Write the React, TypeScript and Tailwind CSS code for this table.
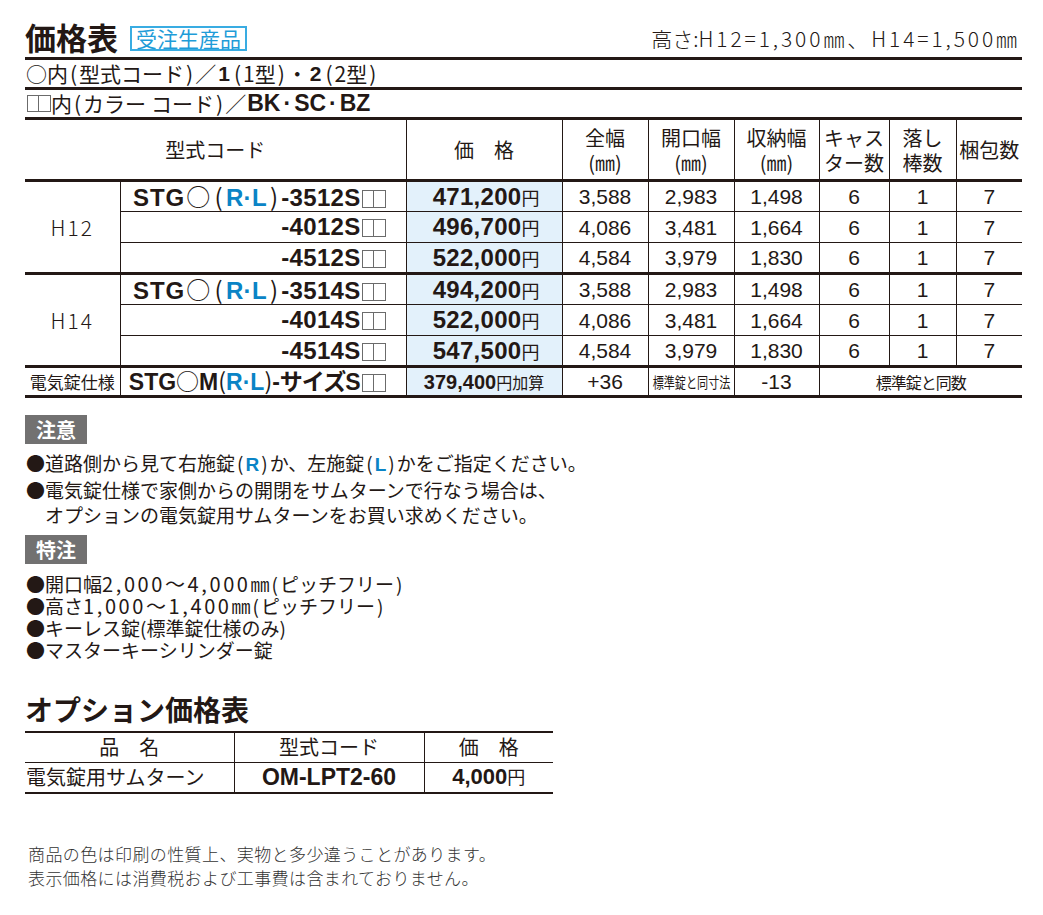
import React from "react";

const ink = "text-[#231815]";
const jp = "font-['Noto_Sans_CJK_JP',sans-serif]";
const latin = "font-['Liberation_Sans','Noto_Sans_CJK_JP',sans-serif]";
const blue = "text-[#0a84c6]";

// 色コードの□□
const Boxes: React.FC<{ h?: string }> = ({ h = "h-[18px]" }) => (
  <span className="inline-flex align-[-2px] ml-[1px]">
    <span className={`w-[12px] ${h} border border-[#6b6b6b]`} />
    <span className={`w-[12px] ${h} border border-l-0 border-[#6b6b6b]`} />
  </span>
);

// 細めの括弧
const P: React.FC<{ c: string; m?: string }> = ({ c, m = "mx-[2px]" }) => (
  <span className={`${jp} font-normal ${m}`}>{c}</span>
);

const Circle: React.FC<{ m?: string }> = ({ m = "" }) => (
  <span className={`${jp} font-normal ${m}`}>○</span>
);

// 数字は少し広め
const N: React.FC<{ children: React.ReactNode }> = ({ children }) => (
  <span className="text-[20px] tracking-[2.6px]">{children}</span>
);

interface Row {
  code: React.ReactNode;
  price: string;
  w: string;
  open: string;
  store: string;
}

const first = (size: string) => (
  <>
    <span className="tracking-[1px]">STG</span>
    <Circle m="mx-[1px]" />
    <P c="(" m="mx-[3px]" />
    <span className={blue}>R·L</span>
    <P c=")" m="mx-[3px]" />
    {size}
  </>
);

const h12: Row[] = [
  { code: first("-3512S"), price: "471,200", w: "3,588", open: "2,983", store: "1,498" },
  { code: "-4012S", price: "496,700", w: "4,086", open: "3,481", store: "1,664" },
  { code: "-4512S", price: "522,000", w: "4,584", open: "3,979", store: "1,830" },
];

const h14: Row[] = [
  { code: first("-3514S"), price: "494,200", w: "3,588", open: "2,983", store: "1,498" },
  { code: "-4014S", price: "522,000", w: "4,086", open: "3,481", store: "1,664" },
  { code: "-4514S", price: "547,500", w: "4,584", open: "3,979", store: "1,830" },
];

const cell = "border-l border-[#231815] text-center p-0";
const num = `${cell} ${latin} text-[21px] leading-none`;
const codeCell = `${cell} ${latin} text-right pr-[20px] text-[24px] font-bold leading-none whitespace-nowrap tracking-[0.3px]`;

const Group: React.FC<{ label: string; rows: Row[] }> = ({ label, rows }) => (
  <>
    {rows.map((r, i) => (
      <tr
        key={i}
        className={`h-[31px] ${i === 0 ? "border-t-[3px]" : "border-t"} border-[#231815]`}
      >
        {i === 0 && (
          <td
            rowSpan={3}
            className="p-0 text-center text-[21px] leading-none font-light tracking-[2px]"
          >
            {label}
          </td>
        )}
        <td className={codeCell}>
          {r.code}
          <Boxes />
        </td>
        <td
          className={`${cell} bg-[#e3f1fb] text-right pr-[22px] ${latin} font-bold text-[24px] leading-none tracking-[0.3px] whitespace-nowrap`}
        >
          {r.price}
          <span className={`${jp} font-normal text-[18px] tracking-normal`}>円</span>
        </td>
        <td className={num}>{r.w}</td>
        <td className={num}>{r.open}</td>
        <td className={num}>{r.store}</td>
        <td className={num}>6</td>
        <td className={num}>1</td>
        <td className={num}>7</td>
      </tr>
    ))}
  </>
);

const Bullet: React.FC<{ children: React.ReactNode }> = ({ children }) => (
  <div className="whitespace-nowrap">●{children}</div>
);

export default function App() {
  return (
    <div className={`w-[1043px] min-h-[915px] bg-white ${ink} ${jp}`}>
      <div className="w-[997px] ml-[25px]">
        {/* 見出し */}
        <div className="flex items-end justify-between h-[57px] pb-[5px]">
          <div className="flex items-end">
            <h1 className="text-[31px] font-bold leading-none">価格表</h1>
            <span className="ml-[12px] mb-[1px] border-2 border-[#39ace2] text-[#1f9cd8] text-[21px] leading-[20px] px-[4px] pb-[1px]">
              受注生産品
            </span>
          </div>
          <div className="text-[21px] font-light leading-none pr-[2px] mb-[3px] whitespace-nowrap">
            高さ:<span className="tracking-[2.9px]">H12=1,300㎜、H14=1,500㎜</span>
          </div>
        </div>

        <div className="border-t-[3px] border-[#231815] h-[30px] flex items-center text-[21px] pl-[1px] whitespace-nowrap">
          ○内<P c="(" />型式コード<P c=")" />／<b className={`${latin} mx-[2px]`}>1</b>
          <P c="(" />1型<P c=")" />・<b className={`${latin} mx-[2px]`}>2</b>
          <P c="(" />2型<P c=")" />
        </div>
        <div className="border-t-[3px] border-[#231815] h-[30px] flex items-center text-[21px] pl-[1px] whitespace-nowrap">
          <Boxes h="h-[17px]" />
          内<P c="(" />カラー<span className="inline-block w-[5px]" />コード<P c=")" />／
          <b className={`${latin} text-[23px] ml-[1px]`}>
            BK<span className="mx-[3px]">·</span>SC<span className="mx-[3px]">·</span>BZ
          </b>
        </div>

        {/* 価格表 */}
        <table className="w-[997px] table-fixed border-collapse">
          <colgroup>
            <col className="w-[95px]" />
            <col className="w-[286px]" />
            <col className="w-[156px]" />
            <col className="w-[86px]" />
            <col className="w-[86px]" />
            <col className="w-[85px]" />
            <col className="w-[70px]" />
            <col className="w-[67px]" />
            <col className="w-[66px]" />
          </colgroup>
          <thead>
            <tr className="h-[62px] border-t-[3px] border-[#231815] text-[20px] leading-[25px]">
              <th colSpan={2} className="p-0 font-normal text-center">
                型式コード
              </th>
              <th className={`${cell} font-normal`}>価　格</th>
              <th className={`${cell} font-normal`}>
                全幅
                <br />
                (㎜)
              </th>
              <th className={`${cell} font-normal`}>
                開口幅
                <br />
                (㎜)
              </th>
              <th className={`${cell} font-normal`}>
                収納幅
                <br />
                (㎜)
              </th>
              <th className={`${cell} font-normal`}>
                キャス
                <br />
                ター数
              </th>
              <th className={`${cell} font-normal`}>
                落し
                <br />
                棒数
              </th>
              <th className={`${cell} font-normal`}>梱包数</th>
            </tr>
          </thead>
          <tbody>
            <Group label="H12" rows={h12} />
            <Group label="H14" rows={h14} />
            <tr className="h-[30px] border-t-[3px] border-b-[3px] border-[#231815]">
              <td className="p-0 text-center text-[17px] leading-none whitespace-nowrap">
                電気錠仕様
              </td>
              <td
                className={`${cell} ${latin} text-right pr-[20px] text-[23px] font-bold leading-none whitespace-nowrap`}
              >
                STG<Circle />M<P c="(" m="mx-0" />
                <span className={blue}>R·L</span>
                <P c=")" m="mx-0" />-<span className={`${jp} tracking-[-1px]`}>サイズ</span>S
                <Boxes />
              </td>
              <td
                className={`${cell} bg-[#e3f1fb] ${latin} font-bold text-[20px] leading-none whitespace-nowrap`}
              >
                379,400
                <span className={`${jp} font-normal text-[16px]`}>円加算</span>
              </td>
              <td className={num}>+36</td>
              <td className={cell}>
                <div className="flex justify-center">
                  <span className="shrink-0 inline-block text-[15px] leading-none scale-x-[0.74] whitespace-nowrap">
                    標準錠と同寸法
                  </span>
                </div>
              </td>
              <td className={num}>-13</td>
              <td colSpan={3} className={`${cell} text-[16px] leading-none tracking-[-1px]`}>
                標準錠と同数
              </td>
            </tr>
          </tbody>
        </table>

        {/* 注意 */}
        <div className="mt-[17px] w-[62px] h-[29px] bg-[#727171] text-white text-[20px] font-bold flex items-center justify-center">
          注意
        </div>
        <div className="mt-[6px] text-[19px] leading-[25px] pl-[1px]">
          <Bullet>
            道路側から見て右施錠<P c="(" />
            <b className={`${latin} ${blue}`}>R</b>
            <P c=")" />か、左施錠<P c="(" />
            <b className={`${latin} ${blue}`}>L</b>
            <P c=")" />かをご指定ください。
          </Bullet>
          <Bullet>電気錠仕様で家側からの開閉をサムターンで行なう場合は、</Bullet>
          <div className="pl-[19px]">オプションの電気錠用サムターンをお買い求めください。</div>
        </div>

        {/* 特注 */}
        <div className="mt-[8px] w-[62px] h-[29px] bg-[#727171] text-white text-[20px] font-bold flex items-center justify-center">
          特注
        </div>
        <div className="mt-[9px] text-[19px] leading-[22px] pl-[1px]">
          <Bullet>
            開口幅<N>2,000～4,000</N>㎜<P c="(" />ピッチフリー<P c=")" />
          </Bullet>
          <Bullet>
            高さ<N>1,000～1,400</N>㎜<P c="(" />ピッチフリー<P c=")" />
          </Bullet>
          <Bullet>キーレス錠(標準錠仕様のみ)</Bullet>
          <Bullet>マスターキーシリンダー錠</Bullet>
        </div>

        {/* オプション価格表 */}
        <h2 className="mt-[34px] text-[28px] font-bold leading-none">オプション価格表</h2>
        <table className="mt-[8px] w-[528px] table-fixed border-collapse">
          <colgroup>
            <col className="w-[209px]" />
            <col className="w-[190px]" />
            <col className="w-[129px]" />
          </colgroup>
          <thead>
            <tr className="h-[30px] border-t-2 border-[#231815] text-[20px] leading-none">
              <th className="p-0 font-normal text-center">品　名</th>
              <th className={`${cell} font-normal`}>型式コード</th>
              <th className={`${cell} font-normal`}>価　格</th>
            </tr>
          </thead>
          <tbody>
            <tr className="h-[31px] border-t border-b-2 border-[#231815]">
              <td className="p-0 text-[20px] leading-none pl-[1px] whitespace-nowrap">
                電気錠用サムターン
              </td>
              <td className={`${cell} ${latin} font-bold text-[23px] leading-none`}>
                OM-LPT2-60
              </td>
              <td className={`${cell} ${latin} font-bold text-[22px] leading-none`}>
                4,000
                <span className={`${jp} font-normal text-[18px]`}>円</span>
              </td>
            </tr>
          </tbody>
        </table>

        {/* 注記 */}
        <div className="mt-[48px] pl-[3px] text-[17px] leading-[24px] font-light text-[#333] tracking-[0.4px]">
          <div>商品の色は印刷の性質上、実物と多少違うことがあります。</div>
          <div>表示価格には消費税および工事費は含まれておりません。</div>
        </div>
      </div>
    </div>
  );
}
